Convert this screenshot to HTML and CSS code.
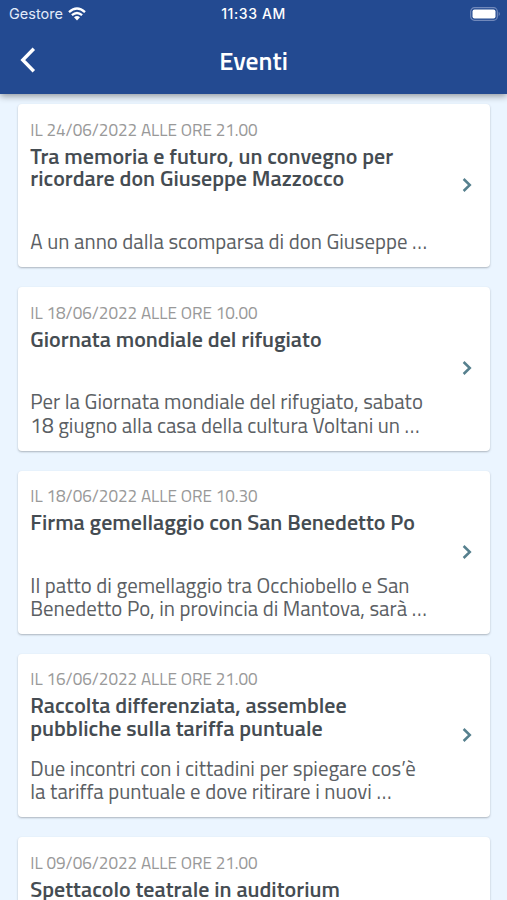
FILE: index.html
```html
<!DOCTYPE html>
<html lang="it">
<head>
<meta charset="utf-8">
<meta name="viewport" content="width=device-width">
<title>Eventi</title>
<link rel="stylesheet" href="styles.css">
</head>
<body>
<header class="header">
  <div class="status">
    <div class="carrier"><span>Gestore</span>
      <svg class="wifi" viewBox="0 0 18 14"><g fill="none" stroke="#fff" stroke-width="2.3"><path d="M1 5.1Q9-2.1 17 5.1"/><path d="M3.9 8.2Q9 3.7 14.1 8.2"/></g><path d="M6 10.3Q9 7.8 12 10.3L9 13.4Z" fill="#fff"/></svg>
    </div>
    <time class="clock">11:33 AM</time>
    <svg class="battery" viewBox="0 0 31 14"><rect x=".7" y=".7" width="26.6" height="12.6" rx="3.8" fill="none" stroke="#7189bb" stroke-width="1.2"/><rect x="2.5" y="2.4" width="23" height="9.2" rx="2" fill="#fff"/><path d="M28.7 4.8Q31 7 28.7 9.2Z" fill="#7189bb"/></svg>
  </div>
  <div class="bar">
    <svg class="back" viewBox="0 0 16 26"><path d="M13.8 1.8L2.8 13L13.8 24.2" fill="none" stroke="#fff" stroke-width="3.4"/></svg>
    <h1>Eventi</h1>
  </div>
</header>
<main class="list">
  <article class="card">
    <div class="body"><p class="date">IL 24/06/2022 ALLE ORE 21.00</p>
      <h2>Tra memoria e futuro, un convegno per<br>ricordare don Giuseppe Mazzocco</h2>
      <p class="text">A un anno dalla scomparsa di don Giuseppe …</p></div>
    <svg class="arrow" viewBox="0 0 10 16"><path d="M1.6 2L7.8 8L1.6 14"/></svg>
  </article>
  <article class="card">
    <div class="body"><p class="date">IL 18/06/2022 ALLE ORE 10.00</p>
      <h2>Giornata mondiale del rifugiato</h2>
      <p class="text">Per la Giornata mondiale del rifugiato, sabato<br>18 giugno alla casa della cultura Voltani un …</p></div>
    <svg class="arrow" viewBox="0 0 10 16"><path d="M1.6 2L7.8 8L1.6 14"/></svg>
  </article>
  <article class="card">
    <div class="body"><p class="date">IL 18/06/2022 ALLE ORE 10.30</p>
      <h2>Firma gemellaggio con San Benedetto Po</h2>
      <p class="text">Il patto di gemellaggio tra Occhiobello e San<br>Benedetto Po, in provincia di Mantova, sarà …</p></div>
    <svg class="arrow" viewBox="0 0 10 16"><path d="M1.6 2L7.8 8L1.6 14"/></svg>
  </article>
  <article class="card">
    <div class="body"><p class="date">IL 16/06/2022 ALLE ORE 21.00</p>
      <h2>Raccolta differenziata, assemblee<br>pubbliche sulla tariffa puntuale</h2>
      <p class="text">Due incontri con i cittadini per spiegare cos’è<br>la tariffa puntuale e dove ritirare i nuovi …</p></div>
    <svg class="arrow" viewBox="0 0 10 16"><path d="M1.6 2L7.8 8L1.6 14"/></svg>
  </article>
  <article class="card">
    <div class="body"><p class="date">IL 09/06/2022 ALLE ORE 21.00</p>
      <h2>Spettacolo teatrale in auditorium</h2></div>
  </article>
</main>
</body>
</html>
```
FILE: styles.css
```css
* { box-sizing: border-box; margin: 0; padding: 0; }
html, body { height: 100%; }
body {
  display: flex;
  flex-direction: column;
  overflow: hidden;
  background: #ebf5ff;
  font-family: "Titillium Web", Roboto, sans-serif;
  color: #454c52;
}
svg { display: block; flex: none; }
.header {
  flex: none;
  height: 94px;
  background: #234a91;
  color: #fff;
  box-shadow: 0 2px 7px rgba(0, 0, 0, .4);
  z-index: 1;
}
.status {
  display: grid;
  grid-template-columns: 1fr auto 1fr;
  align-items: center;
  height: 27px;
  padding: 0 6px 0 9px;
  font-family: Inter, sans-serif;
}
.carrier { display: flex; align-items: center; gap: 5.5px; font-size: 14.5px; color: #e2ebfa; }
.wifi { width: 18px; height: 14px; }
.clock { margin-left: -3px; font-size: 14px; font-weight: 500; letter-spacing: .6px; }
.battery { width: 31px; height: 14px; justify-self: end; }
.bar {
  display: grid;
  grid-template-columns: 60px 1fr 60px;
  align-items: center;
  height: 66px;
}
.back { width: 16px; height: 26px; margin-left: 20px; }
h1 { padding-top: 1px; font-size: 25.6px; font-weight: 600; line-height: 30px; text-align: center; }
.list {
  display: flex;
  flex: 1;
  flex-direction: column;
  gap: 20px;
  min-height: 0;
  overflow: hidden;
  padding: 10px 17px 0 18px;
}
.card {
  display: flex;
  flex: none;
  align-items: center;
  justify-content: space-between;
  height: 163.3px;
  padding-right: 18.5px;
  padding-left: 12.3px;
  border-radius: 4px;
  background: #fff;
  box-shadow: 0 1px 2px rgba(50, 60, 65, .34);
}
.body {
  display: flex;
  flex-direction: column;
  height: 100%;
  padding: 15.6px 0 13.7px;
  white-space: nowrap;
}
.date { font-size: 17.1px; line-height: 20px; color: #999; }
h2 { margin-top: 5px; font-size: 22px; font-weight: 600; line-height: 22.3px; }
.text { margin-top: auto; font-size: 20.8px; line-height: 23.3px; color: #5b6064; }
.arrow { width: 10px; height: 16px; margin-bottom: 1px; }
.arrow path { fill: none; stroke: #56808e; stroke-width: 2.5; }
```
